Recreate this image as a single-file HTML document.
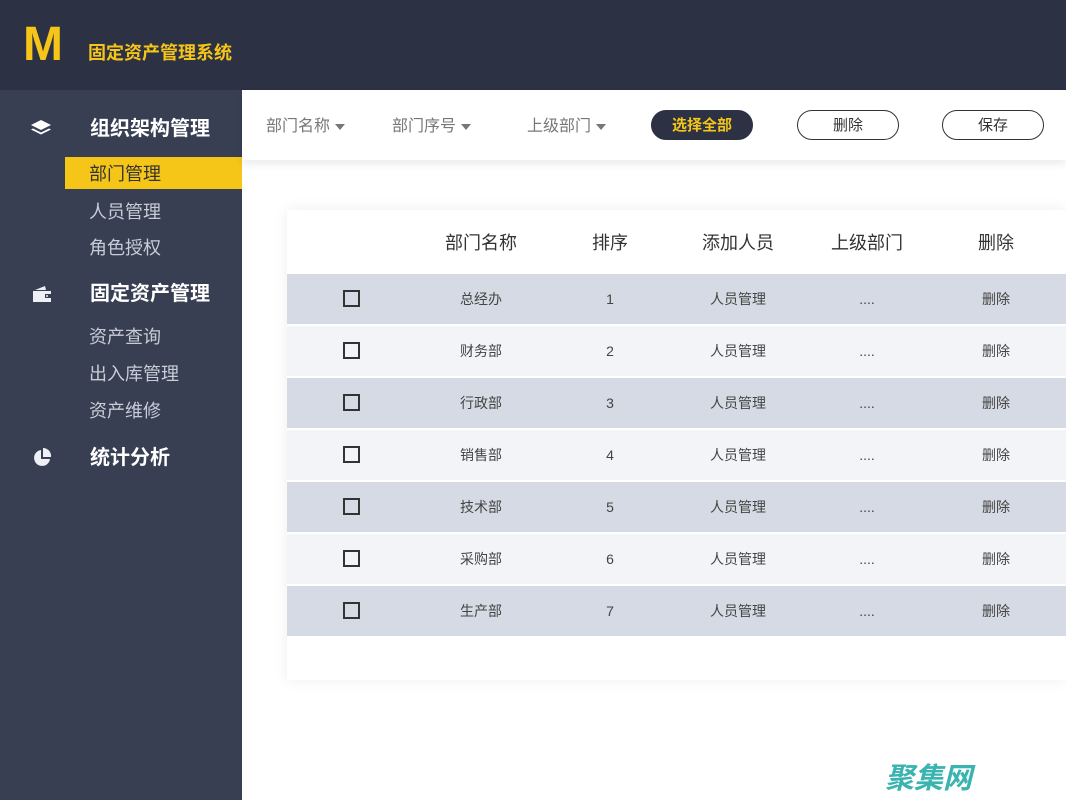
<!DOCTYPE html><html><head><meta charset="utf-8"><style>
*{margin:0;padding:0;box-sizing:border-box}
body{width:1066px;height:800px;overflow:hidden;background:#fff;font-family:"Liberation Sans","Noto Sans CJK SC",sans-serif;position:relative}
.top{position:absolute;left:0;top:0;width:1066px;height:90px;background:#2c3143}
.logo{position:absolute;left:23px;top:25px;color:#f5c518;font-size:48px;font-weight:bold;line-height:40px}
.title{position:absolute;left:88px;top:44px;color:#f5c518;font-size:18px;line-height:18px;font-weight:bold}
.side{position:absolute;left:0;top:90px;width:242px;height:710px;background:#383f53}
.s{position:absolute;color:#fff;font-size:20px;line-height:20px;font-weight:bold;left:90px}
.i{position:absolute;color:#c9ccd6;font-size:18px;line-height:18px;left:89px}
.act{position:absolute;left:65px;top:157px;width:177px;height:32px;background:#f5c518}
.bar{position:absolute;left:242px;top:90px;width:824px;height:70px;background:#fff;box-shadow:0 4px 8px rgba(0,0,0,.08)}
.f{position:absolute;top:119px;color:#777;font-size:16px;line-height:16px}
.f:after{content:"";display:inline-block;margin-left:5px;border:5px solid transparent;border-top:6px solid #777;vertical-align:-4px}
.btn{position:absolute;top:110px;width:102px;height:30px;border:1px solid #333;border-radius:15px;text-align:center;line-height:28px;font-size:15px;color:#333}
.btn span{display:inline-block;line-height:15px;vertical-align:middle}
.card{position:absolute;left:287px;top:210px;width:779px;height:470px;background:#fff;box-shadow:0 0 14px rgba(0,0,0,.07)}
.th{position:absolute;top:234px;font-size:18px;line-height:18px;color:#333;transform:translateX(-50%)}
.row{position:absolute;left:287px;width:779px;height:50px}
.c{position:absolute;top:17px;font-size:14px;line-height:16px;height:16px;color:#444;transform:translateX(-50%)}
.cb{position:absolute;left:56px;top:16px;width:17px;height:17px;border:2px solid #333}
</style></head><body>
<div class="top"><div class="logo">M</div><div class="title">固定资产管理系统</div></div>
<div class="side"></div>
<div class="act"></div>
<svg style="position:absolute;left:30px;top:119px" width="22" height="18" viewBox="0 0 22 18"><path d="M11 1L21 6 11 11 1 6z" fill="#fff"/><path d="M3 9.5L11 13.5 19 9.5 21 10.5 11 15.5 1 10.5z" fill="#fff"/></svg>
<svg style="position:absolute;left:32px;top:285px" width="20" height="18" viewBox="0 0 20 18"><path d="M1 6h18v11H1z" fill="#eef0f5"/><path d="M3 5L13 1l1 4z" fill="#eef0f5"/><rect x="13" y="9" width="7" height="4" fill="#383f53"/><circle cx="15" cy="11" r="1" fill="#eef0f5"/></svg>
<svg style="position:absolute;left:32px;top:448px" width="20" height="20" viewBox="0 0 20 20"><path d="M9 2A8 8 0 1 0 18 11H9z" fill="#eef0f5"/><path d="M11 0A8 8 0 0 1 19 9H11z" fill="#eef0f5"/></svg>
<div class="s" style="top:119px">组织架构管理</div>
<div class="i" style="top:165px;color:#333">部门管理</div>
<div class="i" style="top:203px">人员管理</div>
<div class="i" style="top:239px">角色授权</div>
<div class="s" style="top:284px">固定资产管理</div>
<div class="i" style="top:328px">资产查询</div>
<div class="i" style="top:365px">出入库管理</div>
<div class="i" style="top:402px">资产维修</div>
<div class="s" style="top:448px">统计分析</div>
<div class="bar"></div>
<div class="f" style="left:266px">部门名称</div>
<div class="f" style="left:392px">部门序号</div>
<div class="f" style="left:527px">上级部门</div>
<div class="btn" style="left:651px;background:#2c3143;border-color:#2c3143;color:#f5c518;font-weight:bold"><span>选择全部</span></div>
<div class="btn" style="left:797px"><span>删除</span></div>
<div class="btn" style="left:942px"><span>保存</span></div>
<div class="card"></div>
<div class="th" style="left:481px">部门名称</div><div class="th" style="left:610px">排序</div><div class="th" style="left:738px">添加人员</div><div class="th" style="left:867px">上级部门</div><div class="th" style="left:996px">删除</div>
<div class="row" style="top:274px;background:#d6dae4"><div class="cb"></div><div class="c" style="left:194px">总经办</div><div class="c" style="left:323px">1</div><div class="c" style="left:451px">人员管理</div><div class="c" style="left:580px">....</div><div class="c" style="left:709px">删除</div></div>
<div class="row" style="top:326px;background:#f3f4f8"><div class="cb"></div><div class="c" style="left:194px">财务部</div><div class="c" style="left:323px">2</div><div class="c" style="left:451px">人员管理</div><div class="c" style="left:580px">....</div><div class="c" style="left:709px">删除</div></div>
<div class="row" style="top:378px;background:#d6dae4"><div class="cb"></div><div class="c" style="left:194px">行政部</div><div class="c" style="left:323px">3</div><div class="c" style="left:451px">人员管理</div><div class="c" style="left:580px">....</div><div class="c" style="left:709px">删除</div></div>
<div class="row" style="top:430px;background:#f3f4f8"><div class="cb"></div><div class="c" style="left:194px">销售部</div><div class="c" style="left:323px">4</div><div class="c" style="left:451px">人员管理</div><div class="c" style="left:580px">....</div><div class="c" style="left:709px">删除</div></div>
<div class="row" style="top:482px;background:#d6dae4"><div class="cb"></div><div class="c" style="left:194px">技术部</div><div class="c" style="left:323px">5</div><div class="c" style="left:451px">人员管理</div><div class="c" style="left:580px">....</div><div class="c" style="left:709px">删除</div></div>
<div class="row" style="top:534px;background:#f3f4f8"><div class="cb"></div><div class="c" style="left:194px">采购部</div><div class="c" style="left:323px">6</div><div class="c" style="left:451px">人员管理</div><div class="c" style="left:580px">....</div><div class="c" style="left:709px">删除</div></div>
<div class="row" style="top:586px;background:#d6dae4"><div class="cb"></div><div class="c" style="left:194px">生产部</div><div class="c" style="left:323px">7</div><div class="c" style="left:451px">人员管理</div><div class="c" style="left:580px">....</div><div class="c" style="left:709px">删除</div></div>
<div style="position:absolute;left:885px;top:765px;font-size:29px;line-height:29px;font-weight:bold;color:#3ab4b0;font-style:italic">聚集网</div>
</body></html>
